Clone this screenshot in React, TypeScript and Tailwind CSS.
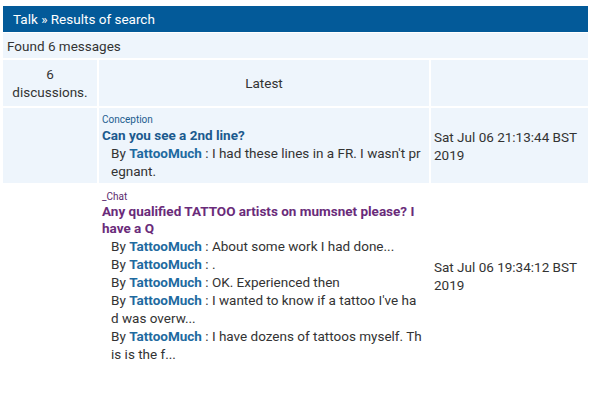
export default function App() {
    const replies = [
        "About some work I had done...",
        ".",
        "OK. Experienced then",
        "I wanted to know if a tattoo I've had was overw...",
        "I have dozens of tattoos myself. This is the f...",
    ];

    return (
        <div className="pl-[3px] pt-[6px] font-['Roboto',sans-serif] text-[13.5px] text-[#333]">
            <div className="w-[585px]">
                <div className="h-[26px] bg-[#035a99] pl-[10px] leading-[26px] text-white">
                    Talk » Results of search
                </div>

                <table className="border-separate border-spacing-x-[2px] border-spacing-y-[2px] -mx-[2px] -mt-[1px] w-[589px]">
                    <tbody>
                        <tr>
                            <td colSpan={3} className="h-[25px] bg-[#eef5fc] px-[4px] leading-[18px]">
                                Found 6 messages
                            </td>
                        </tr>
                        <tr className="bg-[#eef5fc]">
                            <td className="w-[94px] h-[46px] text-center leading-[18px]">
                                6<br />discussions.
                            </td>
                            <td className="w-[330px] text-center">Latest</td>
                            <td></td>
                        </tr>
                        <tr className="bg-[#eef5fc]">
                            <td></td>
                            <td className="pl-[3px] pr-[6px] pt-[6px] pb-[3px] align-top">
                                <div className="text-[10px] leading-[12px] text-[#1d5d8f]">Conception</div>
                                <div className="font-bold leading-[18px] text-[#1b5a8e]">Can you see a 2nd line?</div>
                                <div className="ml-[9px] break-all leading-[18px]">
                                    By <span className="font-bold text-[#1e6aa0]">TattooMuch</span> : I had these lines in a FR. I wasn't pregnant.
                                </div>
                            </td>
                            <td className="px-[3px] leading-[18px]">Sat Jul 06 21:13:44 BST 2019</td>
                        </tr>
                        <tr>
                            <td></td>
                            <td className="pl-[3px] pr-[6px] pt-[6px] pb-[4px] align-top">
                                <div className="text-[10px] leading-[12px] text-[#5b2a6e]">_Chat</div>
                                <div className="font-bold leading-[17px] text-[#6a2b7a]">
                                    Any qualified TATTOO artists on mumsnet please? I have a Q
                                </div>
                                {replies.map((r, i) => (
                                    <div key={i} className="ml-[9px] break-all leading-[18px]">
                                        By <span className="font-bold text-[#1e6aa0]">TattooMuch</span> : {r}
                                    </div>
                                ))}
                            </td>
                            <td className="px-[3px] leading-[18px]">Sat Jul 06 19:34:12 BST 2019</td>
                        </tr>
                    </tbody>
                </table>
            </div>
        </div>
    );
}
